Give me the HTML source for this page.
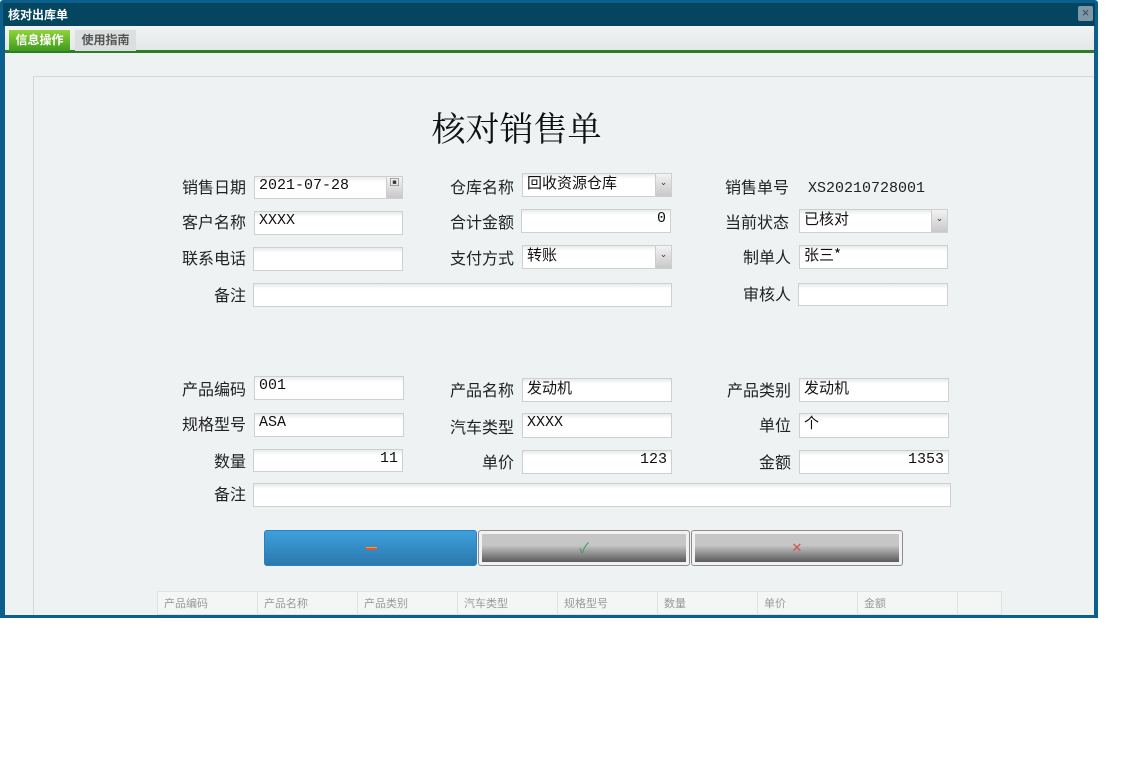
<!DOCTYPE html>
<html><head><meta charset="utf-8"><style>
*{margin:0;padding:0;box-sizing:border-box}
body{width:1135px;height:762px;background:#fff;position:relative;overflow:hidden;font-family:"Liberation Sans","Noto Sans CJK SC",sans-serif}
.a{position:absolute}
.win{left:0;top:0;width:1098px;height:618px;background:#0b5f8c;border-radius:3px}
.tb{left:3px;top:3px;width:1092px;height:23px;background:#04465f}
.tt{left:8px;top:6px;color:#fff;font-size:12px;font-weight:bold}
.cl{left:1078px;top:6px;width:15px;height:15px;background:#7f98a8;border-radius:2px;color:#34495a;font-size:13px;line-height:14px;text-align:center}
.body{left:5px;top:26px;width:1089px;height:589px;background:#eff2f3}
.tabbar{left:5px;top:26px;width:1089px;height:25px;background:linear-gradient(#f2f4f4,#e4e7e7)}
.gl{left:5px;top:50px;width:1089px;height:3px;background:#2f7d22}
.t1{left:9px;top:30px;width:61px;height:21px;background:linear-gradient(#8fd43a,#3f9a1c);color:#fff;font-size:12px;font-weight:bold;text-align:center;line-height:21px}
.t2{left:75px;top:30px;width:61px;height:21px;background:#dcdfdf;color:#555;font-size:12px;font-weight:bold;text-align:center;line-height:21px}
.panel{left:33px;top:76px;width:1061px;height:540px;border-left:1px solid #d5d8d9;border-top:1px solid #d5d8d9}
.h1{left:0;width:1033px;top:102px;text-align:center;font-size:34px;color:#111;font-family:"Noto Serif CJK SC",serif}
.l{font-size:16px;color:#222;text-align:right;width:100px;font-family:"Noto Sans CJK SC",sans-serif;line-height:20px;margin-top:-2px}
.i{background:linear-gradient(#e9ebeb,#fff 5px);border:1px solid #cdd0d1;font-family:"Liberation Mono","Noto Serif CJK SC",monospace;font-size:15px;color:#111;padding:0 4px;line-height:18px;white-space:nowrap;overflow:hidden}
.r{text-align:right}
.dd{position:absolute;right:0;top:0;width:16px;height:100%;background:linear-gradient(#f3f3f3,#c8c8c8);border-left:1px solid #ccc;font-size:9px;text-align:center;line-height:16px;color:#333}
.btn{top:530px;height:36px;border-radius:3px}
.th{top:591px;height:24px;border:1px solid #dfe2e3;background:#f4f6f6;font-size:11px;color:#999;line-height:23px;padding-left:6px;font-family:"Noto Sans CJK SC",sans-serif}
</style></head><body>
<div class="a win"></div>
<div class="a tb"></div>
<div class="a tt">核对出库单</div>
<div class="a cl">×</div>
<div class="a body"></div>
<div class="a tabbar"></div>
<div class="a gl"></div>
<div class="a t1">信息操作</div>
<div class="a t2">使用指南</div>
<div class="a panel"></div>
<div class="a h1">核对销售单</div>

<div class="a l" style="left:146px;top:178px">销售日期</div>
<div class="a i" style="left:254px;top:176px;width:149px;height:23px">2021-07-28<span class="dd" style="font-size:10px">▣</span></div>
<div class="a l" style="left:414px;top:178px">仓库名称</div>
<div class="a i" style="left:522px;top:173px;width:150px;height:24px;font-family:'Noto Sans CJK SC',sans-serif">回收资源仓库<span class="dd">⌄</span></div>
<div class="a l" style="left:689px;top:178px">销售单号</div>
<div class="a" style="left:808px;top:180px;font-family:'Liberation Mono',monospace;font-size:15px;color:#222">XS20210728001</div>

<div class="a l" style="left:146px;top:213px">客户名称</div>
<div class="a i" style="left:254px;top:211px;width:149px;height:24px">XXXX</div>
<div class="a l" style="left:414px;top:213px">合计金额</div>
<div class="a i r" style="left:521px;top:209px;width:150px;height:24px">0</div>
<div class="a l" style="left:689px;top:213px">当前状态</div>
<div class="a i" style="left:799px;top:209px;width:149px;height:24px;font-family:'Noto Sans CJK SC',sans-serif">已核对<span class="dd">⌄</span></div>

<div class="a l" style="left:146px;top:249px">联系电话</div>
<div class="a i" style="left:253px;top:247px;width:150px;height:24px"></div>
<div class="a l" style="left:414px;top:249px">支付方式</div>
<div class="a i" style="left:522px;top:245px;width:150px;height:24px;font-family:'Noto Sans CJK SC',sans-serif">转账<span class="dd">⌄</span></div>
<div class="a l" style="left:691px;top:248px">制单人</div>
<div class="a i" style="left:799px;top:245px;width:149px;height:24px;font-family:'Noto Sans CJK SC',sans-serif">张三*</div>

<div class="a l" style="left:146px;top:286px">备注</div>
<div class="a i" style="left:253px;top:283px;width:419px;height:24px"></div>
<div class="a l" style="left:691px;top:285px">审核人</div>
<div class="a i" style="left:798px;top:283px;width:150px;height:23px"></div>

<div class="a l" style="left:146px;top:380px">产品编码</div>
<div class="a i" style="left:254px;top:376px;width:150px;height:24px">001</div>
<div class="a l" style="left:414px;top:381px">产品名称</div>
<div class="a i" style="left:522px;top:378px;width:150px;height:24px;font-family:'Noto Sans CJK SC',sans-serif">发动机</div>
<div class="a l" style="left:691px;top:381px">产品类别</div>
<div class="a i" style="left:799px;top:378px;width:150px;height:24px;font-family:'Noto Sans CJK SC',sans-serif">发动机</div>

<div class="a l" style="left:146px;top:415px">规格型号</div>
<div class="a i" style="left:254px;top:413px;width:150px;height:24px">ASA</div>
<div class="a l" style="left:414px;top:418px">汽车类型</div>
<div class="a i" style="left:522px;top:413px;width:150px;height:25px">XXXX</div>
<div class="a l" style="left:691px;top:416px">单位</div>
<div class="a i" style="left:799px;top:413px;width:150px;height:25px;font-family:'Noto Sans CJK SC',sans-serif">个</div>

<div class="a l" style="left:146px;top:452px">数量</div>
<div class="a i r" style="left:253px;top:449px;width:150px;height:23px">11</div>
<div class="a l" style="left:414px;top:453px">单价</div>
<div class="a i r" style="left:522px;top:450px;width:150px;height:24px">123</div>
<div class="a l" style="left:691px;top:453px">金额</div>
<div class="a i r" style="left:799px;top:450px;width:150px;height:24px">1353</div>

<div class="a l" style="left:146px;top:485px">备注</div>
<div class="a i" style="left:253px;top:483px;width:698px;height:24px"></div>

<div class="a btn" style="left:264px;width:213px;background:linear-gradient(#3ea0dc,#2b78ad);border:1px solid #2a80c0"><div style="position:absolute;left:101px;top:16px;width:11px;height:3px;background:#e2552a;border-top:1px solid #f0a030"></div></div>
<div class="a btn" style="left:478px;width:212px;border:1px solid #8c8c8c;background:#f2f2f2;padding:3px"><div style="height:100%;background:linear-gradient(#c6c6c6 40%,#5a5a5a);text-align:center;color:#3d9a5a;font-size:14px;line-height:28px">✓</div></div>
<div class="a btn" style="left:691px;width:212px;border:1px solid #8c8c8c;background:#f2f2f2;padding:3px"><div style="height:100%;background:linear-gradient(#c6c6c6 40%,#5a5a5a);text-align:center;color:#d25050;font-size:13px;line-height:28px">✕</div></div>

<div class="a th" style="left:157px;width:101px">产品编码</div>
<div class="a th" style="left:257px;width:101px">产品名称</div>
<div class="a th" style="left:357px;width:101px">产品类别</div>
<div class="a th" style="left:457px;width:101px">汽车类型</div>
<div class="a th" style="left:557px;width:101px">规格型号</div>
<div class="a th" style="left:657px;width:101px">数量</div>
<div class="a th" style="left:757px;width:101px">单价</div>
<div class="a th" style="left:857px;width:101px">金额</div>
<div class="a th" style="left:957px;width:45px"></div>
<div class="a" style="left:0;top:615px;width:1098px;height:3px;background:#0b5f8c"></div>
</body></html>
